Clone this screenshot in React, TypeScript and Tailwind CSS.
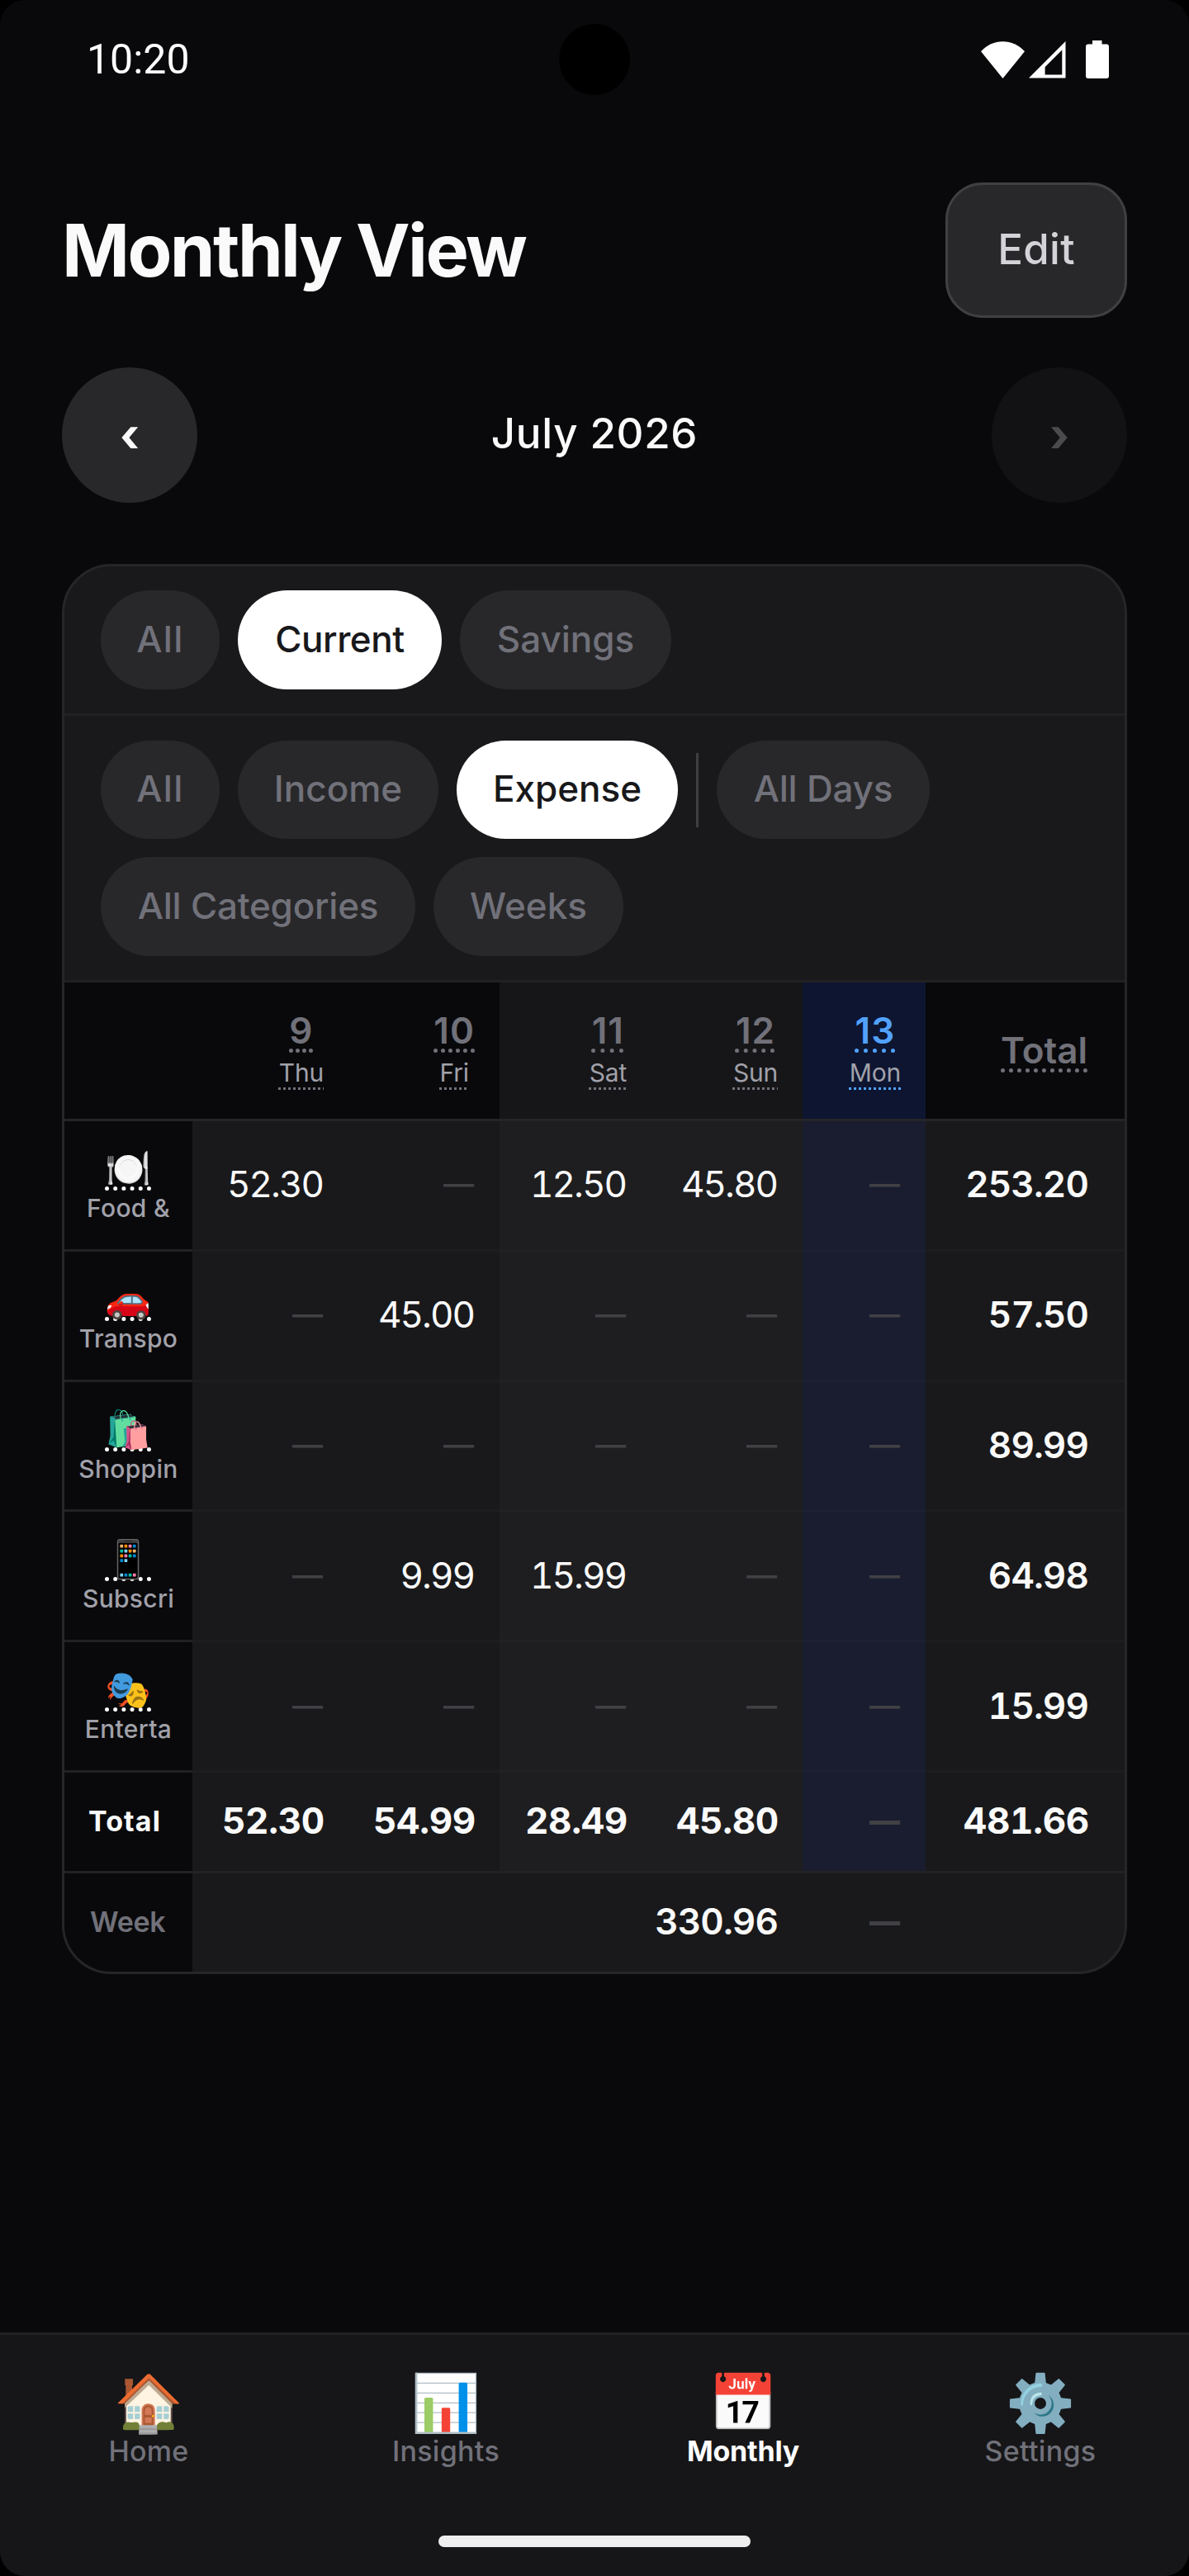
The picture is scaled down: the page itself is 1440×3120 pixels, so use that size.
import clsx from 'clsx';

interface Day {
  date: string;
  name: string;
  kind: 'weekday' | 'weekend' | 'today';
}

interface CategoryRow {
  icon: string;
  label: string;
  values: (string | null)[];
  total: string;
}

const days: Day[] = [
  { date: '9', name: 'Thu', kind: 'weekday' },
  { date: '10', name: 'Fri', kind: 'weekday' },
  { date: '11', name: 'Sat', kind: 'weekend' },
  { date: '12', name: 'Sun', kind: 'weekend' },
  { date: '13', name: 'Mon', kind: 'today' },
];

const categories: CategoryRow[] = [
  { icon: '🍽️', label: 'Food &', values: ['52.30', null, '12.50', '45.80', null], total: '253.20' },
  { icon: '🚗', label: 'Transpo', values: [null, '45.00', null, null, null], total: '57.50' },
  { icon: '🛍️', label: 'Shoppin', values: [null, null, null, null, null], total: '89.99' },
  { icon: '📱', label: 'Subscri', values: [null, '9.99', '15.99', null, null], total: '64.98' },
  { icon: '🎭', label: 'Enterta', values: [null, null, null, null, null], total: '15.99' },
];

const dayTotals = ['52.30', '54.99', '28.49', '45.80', null];

const tabs = [
  { icon: '🏠', label: 'Home' },
  { icon: '📊', label: 'Insights' },
  { icon: '📅', label: 'Monthly' },
  { icon: '⚙️', label: 'Settings' },
];

const gridCols = 'grid grid-cols-[155px_189px_183px_184px_183px_149px_1fr]';

const headerColors = {
  weekday: 'bg-[#09090b] text-[#71717a]',
  weekend: 'bg-[#161618] text-[#71717a]',
  today: 'bg-[#0d1531] text-[#51a2ff]',
};

const cellBg = {
  weekday: 'bg-[#19191b]',
  weekend: 'bg-[#1e1e20]',
  today: 'bg-[#191d2f]',
};

const cellBorder = {
  weekday: 'border-[#1d1d1f]',
  weekend: 'border-[#212123]',
  today: 'border-[#1b2033]',
};

const amountStyle = {
  normal: 'tracking-[-2px]',
  semibold: 'font-semibold tracking-[-0.9px] -mr-px',
  bold: 'font-bold tracking-[-0.3px] -mr-0.5',
};

function StatusBar() {
  return (
    <div className="grid h-36 grid-cols-3 items-center">
      <span className="pl-[105px] font-['Roboto'] text-[50px] leading-none text-white">10:20</span>
      <div className="size-[86px] justify-self-center rounded-full bg-black" />
      <div className="flex items-center justify-end pr-[97px]">
        <svg width="53" height="45" viewBox="0 0 53 45" fill="#fff">
          <path d="M26.5 45 0 12.2C7.4 4.4 16.6 0.3 26.5 0.3S45.6 4.4 53 12.2Z" />
        </svg>
        <svg className="ml-[5px]" width="45" height="46" viewBox="0 0 45 46">
          <path fill="#fff" fillRule="evenodd" d="M44.5 1V45.6H0ZM40.3 11.5 19.6 32.2V41.4H40.3Z" />
        </svg>
        <svg className="ml-[24px]" width="28" height="46" viewBox="0 0 28 46" fill="#fff">
          <path d="M8 0H19.5V4.5H25A3 3 0 0 1 28 7.5V43A3 3 0 0 1 25 46H3A3 3 0 0 1 0 43V7.5A3 3 0 0 1 3 4.5H8Z" />
        </svg>
      </div>
    </div>
  );
}

function Chip({ label, active, className }: { label: string; active?: boolean; className: string }) {
  return (
    <button
      className={clsx(
        'flex h-full items-center justify-center rounded-full pb-[3px] text-[44px] font-medium leading-none whitespace-nowrap',
        active ? 'bg-white text-[#18181b]' : 'bg-[#28282a] text-[#71717a]',
        className,
      )}
    >
      {label}
    </button>
  );
}

function Amount({ value, weight = 'normal' }: { value: string | null; weight?: keyof typeof amountStyle }) {
  if (!value) {
    return (
      <span
        className={clsx(
          'text-[37px] leading-[44px] text-[#414145]',
          weight === 'normal' ? 'font-medium' : 'font-extrabold',
        )}
      >
        —
      </span>
    );
  }
  return (
    <span className={clsx('text-[44px] leading-[44px] tabular-nums text-[#fafafa]', amountStyle[weight])}>
      {value}
    </span>
  );
}

export default function App() {
  return (
    <div className="h-[3120px] w-[1440px] bg-black font-['Inter','Noto_Color_Emoji',sans-serif]">
      <div className="flex h-full flex-col overflow-hidden rounded-[30px] bg-[#09090b]">
        <StatusBar />

        <main className="flex-1 px-[75px] pt-[77px]">
          <div className="flex h-[164px] items-center justify-between">
            <h1 className="text-[88px] font-bold leading-none tracking-[-2.57px] text-[#fafafa]">Monthly View</h1>
            <button className="flex h-full w-[220px] items-center justify-center rounded-[45px] border-[3px] border-[#404043] bg-[#28282a] pb-[3px] text-[51px] font-medium leading-none tracking-[0.3px] text-[#d4d4d8]">
              Edit
            </button>
          </div>

          <div className="mt-[60px] flex h-[164px] items-center justify-between text-[51px] font-medium leading-none text-[#fafafa]">
            <button className="flex size-[164px] items-center justify-center rounded-full bg-[#28282a] text-[56px] font-bold">
              ‹
            </button>
            <span className="pb-[5px] tracking-[0.7px]">July 2026</span>
            <button className="flex size-[164px] items-center justify-center rounded-full bg-[#121214] text-[56px] font-bold text-[#4b4b4d]">
              ›
            </button>
          </div>

          <section className="mt-[74px] overflow-hidden rounded-[60px] border-[3px] border-[#262628] bg-[#19191b]">
            <div className="border-b-[3px] border-[#212123] py-[29px] pl-11">
              <div className="flex h-[120px] gap-[22px]">
                <Chip label="All" className="w-[144px] tracking-[1.3px]" />
                <Chip label="Current" active className="w-[247px] tracking-[-0.47px]" />
                <Chip label="Savings" className="w-[256px]" />
              </div>
            </div>
            <div className="flex flex-col gap-[22px] border-b-[3px] border-[#212123] pb-[29px] pl-11 pt-[30px]">
              <div className="flex h-[119px] items-center gap-[22px]">
                <Chip label="All" className="w-[144px] tracking-[1.3px]" />
                <Chip label="Income" className="w-[243px]" />
                <Chip label="Expense" active className="w-[268px]" />
                <div className="h-[90px] w-[3px] bg-[#3f3f42]" />
                <Chip label="All Days" className="w-[258px] tracking-[-0.2px]" />
              </div>
              <div className="flex h-[120px] gap-[22px]">
                <Chip label="All Categories" className="w-[381px] tracking-[-0.24px]" />
                <Chip label="Weeks" className="w-[230px]" />
              </div>
            </div>

            <div className={clsx(gridCols, 'h-[168px]')}>
              <div className="border-b-[3px] border-[#252527] bg-[#09090b]" />
              {days.map((day) => (
                <div
                  key={day.date}
                  className={clsx(
                    'flex flex-col items-end border-b-[3px] border-[#252527] pr-[30px] pt-[34px]',
                    headerColors[day.kind],
                  )}
                >
                  <div className="flex flex-col items-center gap-[7px]">
                    <span className="text-[44px] font-semibold leading-[48px] tracking-[1px] underline decoration-dotted decoration-[4.5px] underline-offset-[6px]">
                      {day.date}
                    </span>
                    <span className="text-[30px] leading-[40px] tracking-[-0.2px] underline decoration-dotted decoration-[3px] underline-offset-[7px]">
                      <span className="text-[#a1a1aa]">{day.name}</span>
                    </span>
                  </div>
                </div>
              ))}
              <div className="flex items-center justify-end border-b-[3px] border-[#252527] bg-[#09090b] pb-0.5 pr-[45px] text-[44px] font-semibold leading-none text-[#71717a]">
                <span className="underline decoration-dotted decoration-[4.5px] underline-offset-[6px]">Total</span>
              </div>
            </div>

            {categories.map((row) => (
              <div key={row.label} className={clsx(gridCols, 'h-[157.8px]')}>
                <div className="flex flex-col items-center gap-1 border-b-[3px] border-[#212123] bg-[#09090b] pt-[33px]">
                  <span className="text-[45px] leading-[48px] text-white underline decoration-dotted decoration-[4.5px] underline-offset-[6px] [text-decoration-skip-ink:none]">
                    {row.icon}
                  </span>
                  <span className="text-[30px] font-medium leading-[40px] tracking-[0.3px] text-[#a1a1aa]">
                    {row.label}
                  </span>
                </div>
                {row.values.map((value, i) => (
                  <div
                    key={i}
                    className={clsx(
                      'flex items-center justify-end border-b-[3px] pb-0.5 pr-[31px]',
                      cellBg[days[i].kind],
                      cellBorder[days[i].kind],
                    )}
                  >
                    <Amount value={value} />
                  </div>
                ))}
                <div className="flex items-center justify-end border-b-[3px] border-[#1d1d1f] pb-0.5 pr-[45px]">
                  <Amount value={row.total} weight="semibold" />
                </div>
              </div>
            ))}

            <div className={clsx(gridCols, 'h-[122px]')}>
              <div className="flex items-center border-b-[3px] border-[#222224] bg-[#09090b] pl-[29px] text-[34px] font-bold leading-none tracking-[1.1px] text-[#fafafa]">
                Total
              </div>
              {dayTotals.map((value, i) => (
                <div
                  key={i}
                  className={clsx(
                    'flex items-center justify-end border-b-[3px] border-[#222224] pb-0.5 pr-[31px]',
                    cellBg[days[i].kind],
                  )}
                >
                  <Amount value={value} weight="bold" />
                </div>
              ))}
              <div className="flex items-center justify-end border-b-[3px] border-[#222224] pb-0.5 pr-[45px]">
                <Amount value="481.66" weight="bold" />
              </div>
            </div>

            <div className={clsx(gridCols, 'h-[119px]')}>
              <div className="flex items-center bg-[#09090b] pl-[31px] text-[34px] font-semibold leading-none tracking-[-0.3px] text-[#71717a]">
                Week
              </div>
              <div className="col-span-4 flex items-center justify-end pb-0.5 pr-[31px]">
                <Amount value="330.96" weight="semibold" />
              </div>
              <div className="flex items-center justify-end pb-0.5 pr-[31px]">
                <Amount value={null} weight="semibold" />
              </div>
            </div>
          </section>
        </main>

        <nav className="flex h-[295px] flex-col items-center justify-between border-t-[3px] border-[#212123] bg-[#161618] pb-[35px] pt-12">
          <div className="grid w-full grid-cols-4">
            {tabs.map((tab) => (
              <div key={tab.label} className="flex flex-col items-center gap-[5px]">
                <span className="text-[67.5px] leading-[68px]">{tab.icon}</span>
                <span
                  className={clsx(
                    'text-[34px] leading-[40px]',
                    tab.label === 'Monthly'
                      ? 'font-bold tracking-[-0.2px] text-white'
                      : 'font-medium tracking-[0.3px] text-[#71717a]',
                  )}
                >
                  {tab.label}
                </span>
              </div>
            ))}
          </div>
          <div className="h-3.5 w-[378px] rounded-full bg-[#eeeeee]" />
        </nav>
      </div>
    </div>
  );
}
